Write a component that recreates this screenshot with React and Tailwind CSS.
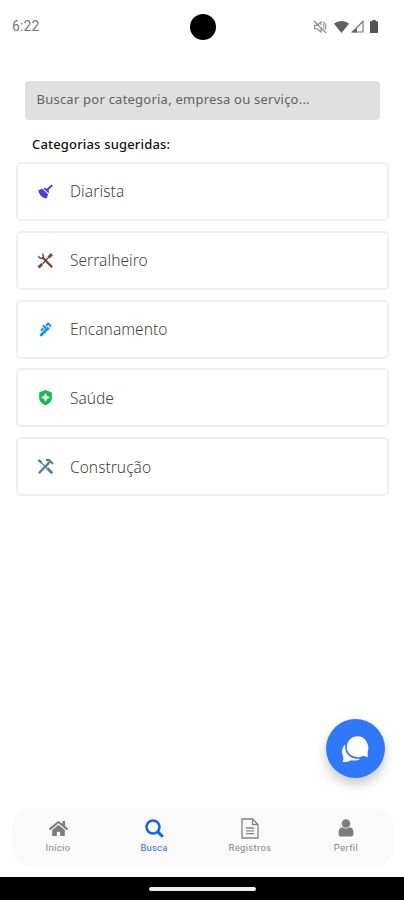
import React from 'react';
import { MdPlumbing } from 'react-icons/md';
import { FaHome } from 'react-icons/fa';

const Broom = ({ className }) => (
  <svg viewBox="0 0 24 24" fill="currentColor" className={className}>
    <path d="M20.500 2l2 2-6.300 6c1 1.500 1 3.300.1 4.500L9 7.700c1.300-.9 3.200-.7 4.700.4zM6.500 19C4 16.800 2.200 13.500 1.700 10.300l6-2.200 8 8-2.200 5.800c-2.700-.4-5-1.300-7-2.900z" />
  </svg>
);

const WrenchDriver = ({ className }) => (
  <svg viewBox="0 0 24 24" fill="none" stroke="currentColor" className={className}>
    <path d="M8 8l13.500 13.500" strokeWidth="3.400" />
    <path d="M2.300 5.500c.4 2.500 2.300 3.800 5 3.300 2-1.600 2.200-4.200.2-6.300" strokeWidth="2" />
    <path d="M8 16.500l7.500-8" strokeWidth="2" />
    <path d="M2.200 22l5-5M16 8l5-5" strokeWidth="4" />
  </svg>
);

const HammerDriver = ({ className }) => (
  <svg viewBox="0 0 24 24" fill="none" stroke="currentColor" className={className}>
    <path d="M2.500 21.500L16 8" strokeWidth="3.200" />
    <path d="M12.500 3.500c3-1.500 5.500-.4 7 1.700l3 3.300M15 8l4-3" strokeWidth="3" />
    <path d="M2 2.500l4 4" strokeWidth="3.500" />
    <path d="M5 5.500l9 9" strokeWidth="1.800" />
    <path d="M14.500 14.500l7 7" strokeWidth="4" />
  </svg>
);

const HealthShield = ({ className }) => (
  <svg viewBox="0 0 24 24" className={className}>
    <path d="M12 1.500l9 3.300v6.700c0 5.500-3.800 9.600-9 11.300-5.200-1.700-9-5.800-9-11.300V4.800z" fill="currentColor" />
    <path d="M12 6.300l1.800 3.800 3.800 1.700-3.800 1.700-1.800 3.800-1.800-3.800-3.800-1.700 3.800-1.700z" fill="white" stroke="white" strokeWidth="1" strokeLinejoin="round" />
  </svg>
);

const categories = [
  { name: 'Diarista', Icon: Broom, color: 'text-[#4a3fe0]', spacing: 'tracking-[0.1px]' },
  { name: 'Serralheiro', Icon: WrenchDriver, color: 'text-[#79483b]', spacing: 'tracking-[0.05px]' },
  { name: 'Encanamento', Icon: MdPlumbing, color: 'text-[#1497ee]', spacing: 'tracking-[0.03px]' },
  { name: 'Saúde', Icon: HealthShield, color: 'text-[#12bd4b]', spacing: 'tracking-[0px]' },
  { name: 'Construção', Icon: HammerDriver, color: 'text-[#5b7d8a]', spacing: 'tracking-[0.03px]' },
];

function StatusBar() {
  return (
    <header className="grid h-[53px] grid-cols-3 items-center pr-[26px] pl-[12px] text-[#777]">
      <span className="font-[Roboto,sans-serif] text-[14px] tracking-[0.1px]">6:22</span>
      <span className="ml-[16px] h-[26px] w-[26px] justify-self-center rounded-full bg-black" />
      <div className="flex items-center justify-end">
        <svg className="mr-[7px] h-[14px] w-[14px]" viewBox="0 0 14 14" fill="none" stroke="#888" strokeWidth="1.1">
          <path d="M1 1l12 12M1 5.2h3.2L8 2v3M4.2 5.4L1.6 5.3v3.5h2.6L8 12V8.5M10 4.500c1 .8 1.300 2.800.5 4M10 2c2.800 1.200 3.800 5 2 8" />
        </svg>
        <svg className="mr-[2px] h-[12px] w-[15px]" viewBox="0 0 15 12" fill="#606060">
          <path d="M0 2.700C4.300-.8 10.700-.8 15 2.700L7.500 12z" />
        </svg>
        <svg className="mr-[6px] h-[13px] w-[13px]" viewBox="0 0 13 13">
          <path d="M1.300 12L12 1.300V12z" fill="none" stroke="#777" strokeWidth="1.200" />
          <path d="M1 12.400l5-5v5z" fill="#666" />
        </svg>
        <svg className="h-[13px] w-[8px]" viewBox="0 0 8 13" fill="#555">
          <path d="M2.300 0h3.400v1.300H8V13H0V1.300h2.300z" />
        </svg>
      </div>
    </header>
  );
}

function PageIcon() {
  return (
    <svg className="h-[21px] w-[18px]" viewBox="0 0 18 21" fill="none" stroke="#858585" strokeWidth="1.300">
      <path d="M1 1h10.500L17 6.500V20H1zM11.500 1v5.500H17M5 10h8M5 12.800h8M5 15.600h8" />
    </svg>
  );
}

function PersonIcon() {
  return (
    <svg className="h-[18px] w-[16px]" viewBox="0 0 16 18" fill="#7d7d7d">
      <circle cx="8" cy="4.500" r="4.300" />
      <path d="M4.500 8.300c2 1.600 5 1.600 7 0 3 .5 4 2.300 4 5.700 0 2.400-.7 3.500-2.500 3.500H3C1.200 17.500.5 16.400.5 14c0-3.400 1-5.200 4-5.700z" />
    </svg>
  );
}

function SearchIcon() {
  return (
    <svg className="h-[19px] w-[19px]" viewBox="0 0 19 19" fill="none" stroke="#1463ea" strokeWidth="2.500">
      <circle cx="8" cy="8" r="6.500" />
      <path d="M12.600 12.600l5.200 5.200" strokeWidth="3" />
    </svg>
  );
}

const tabs = [
  { label: 'Início', icon: <FaHome className="h-[19px] w-[19px] text-[#7d7d7d]" />, spacing: 'tracking-[0.350px]' },
  { label: 'Busca', icon: <SearchIcon />, active: true, spacing: 'tracking-[0.150px]' },
  { label: 'Registros', icon: <PageIcon />, spacing: 'tracking-[0.350px]' },
  { label: 'Perfil', icon: <PersonIcon />, spacing: 'tracking-[0.350px]' },
];

export default function App() {
  return (
    <div className="flex h-[900px] w-[404px] flex-col overflow-hidden bg-white font-['Noto_Sans',sans-serif]">
      <StatusBar />
      <main className="flex flex-1 flex-col">
        <div className="mt-[28px] mr-[24px] ml-[25px] flex h-[39px] items-center rounded-[4px] bg-[#e0e0e0] pb-[2px] pl-[11.500px] text-[13px] tracking-[0.230px] whitespace-nowrap text-[#626262]">
          Buscar por categoria, empresa ou serviço...
        </div>
        <h1 className="mt-[14px] ml-[32px] text-[13px] leading-[20px] font-medium tracking-[0.170px] text-[#111]">Categorias sugeridas:</h1>
        <ul className="mt-[8px] mr-[15px] ml-[16px] flex flex-col gap-[9.800px]">
          {categories.map(({ name, Icon, color, spacing }) => (
            <li key={name} className="flex h-[59px] items-center rounded-[5px] border-2 border-[#f0f0f0] pl-[19px]">
              <Icon className={`h-[17px] w-[17px] ${color}`} />
              <span className={`mt-[1px] ml-[16px] text-[15.500px] font-light text-[#444] ${spacing}`}>{name}</span>
            </li>
          ))}
        </ul>
        <button className="mt-auto mr-[19px] mb-[30px] flex h-[59px] w-[59px] items-center justify-center self-end rounded-full bg-[#2f78f8] shadow-[0_6px_12px_rgba(0,0,0,0.22)]">
          <svg className="h-[28px] w-[28px]" viewBox="0 0 28 28">
            <path d="M.5 27c1-2 1.100-3.800.5-6C-1 16.500 0 12 4 9l14 15c-2.500 1.500-5.500 1.900-8.500 1.200C7 26.500 4 27.200.5 27z" fill="white" />
            <path d="M15.500.5C9 .5 4 5.500 4 12s5 11 11.500 11c2 0 4-.5 5.500-1.300 2 .8 4 1 6.500.6-1-1.800-1.400-3.300-1-5C29 9.500 24 .5 15.500.5z" fill="white" stroke="#2f78f8" strokeWidth="1.700" />
          </svg>
        </button>
      </main>
      <nav className="mr-[10px] mb-[10px] ml-[12px] h-[59px] rounded-[20px] bg-[#fafafa]">
        <div className="-mr-[2px] grid grid-cols-4">
          {tabs.map(({ label, icon, active, spacing }) => (
            <div key={label} className="flex flex-col items-center pt-[8px] pr-[4px]">
              <span className="flex h-[24px] items-center justify-center">{icon}</span>
              <span className={`mt-[1px] font-[Roboto,sans-serif] text-[9.500px] leading-[13px] ${spacing} ${active ? 'text-[#3565ee]' : 'text-[#858585]'}`}>{label}</span>
            </div>
          ))}
        </div>
      </nav>
      <footer className="flex h-[23px] items-center justify-center bg-black">
        <span className="h-[4px] w-[107px] rounded-full bg-[#eee]" />
      </footer>
    </div>
  );
}
